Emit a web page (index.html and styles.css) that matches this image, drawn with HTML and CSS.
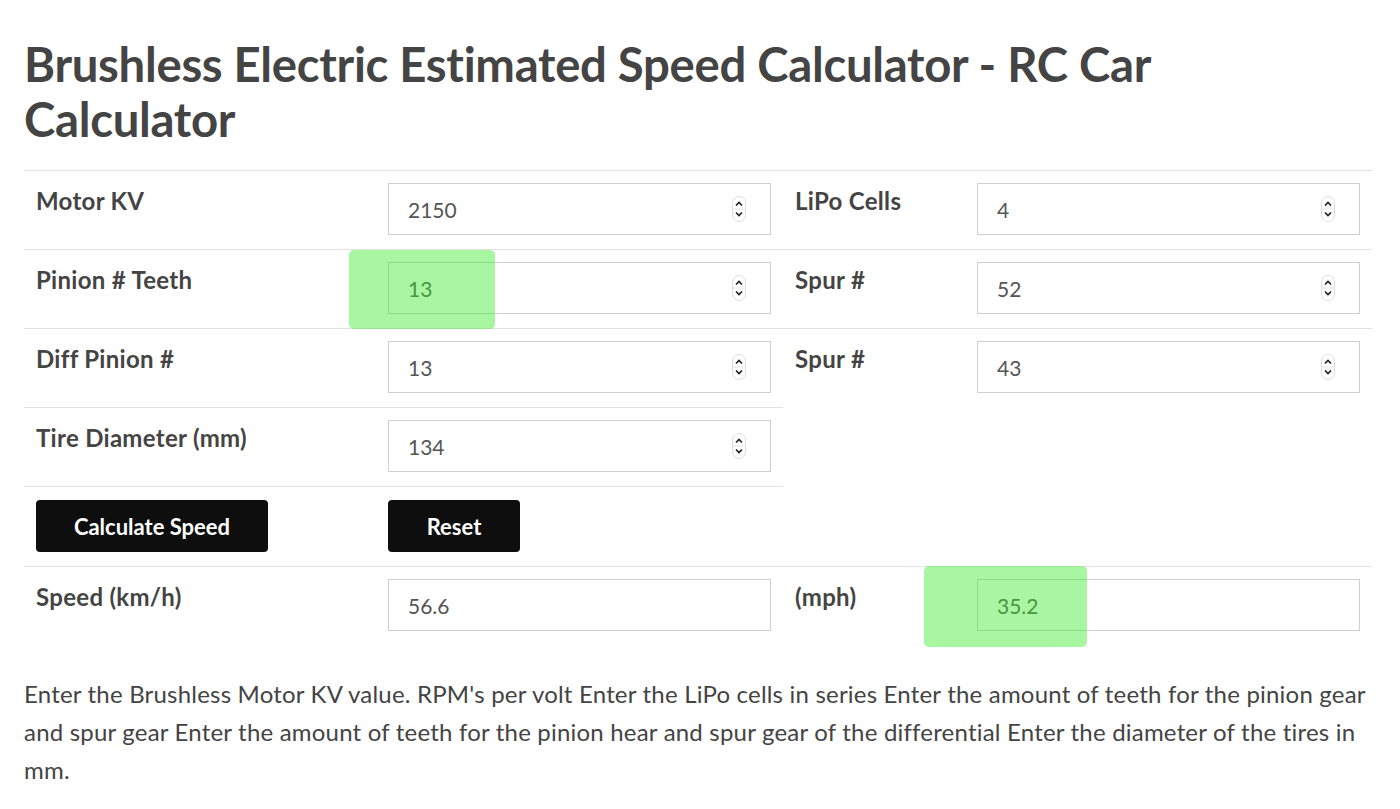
FILE: index.html
```html
<!DOCTYPE html>
<html>
<head>
<meta charset="utf-8">
<link rel="stylesheet" href="styles.css">
</head>
<body>
<div class="page">
  <h1 class="title">Brushless Electric Estimated Speed Calculator - RC Car Calculator</h1>
  <table class="calc">
    <colgroup>
      <col class="c1"><col class="c2"><col class="c3"><col class="c4">
    </colgroup>
    <tr>
      <td class="lbl">Motor KV</td>
      <td><div class="field"><span class="val">2150</span><svg class="spin" width="14" height="26" viewBox="0 0 14 26"><rect x="0.5" y="0.5" width="13" height="25" rx="6.5" fill="#fff" stroke="#ddd"/><line x1="1" y1="13" x2="13" y2="13" stroke="#e3e3e3"/><path d="M4 9.5 L7 6.5 L10 9.5" fill="none" stroke="#222" stroke-width="1.7"/><path d="M4 16.5 L7 19.5 L10 16.5" fill="none" stroke="#222" stroke-width="1.7"/></svg></div></td>
      <td class="lbl">LiPo Cells</td>
      <td><div class="field"><span class="val">4</span><svg class="spin" width="14" height="26" viewBox="0 0 14 26"><rect x="0.5" y="0.5" width="13" height="25" rx="6.5" fill="#fff" stroke="#ddd"/><line x1="1" y1="13" x2="13" y2="13" stroke="#e3e3e3"/><path d="M4 9.5 L7 6.5 L10 9.5" fill="none" stroke="#222" stroke-width="1.7"/><path d="M4 16.5 L7 19.5 L10 16.5" fill="none" stroke="#222" stroke-width="1.7"/></svg></div></td>
    </tr>
    <tr>
      <td class="lbl">Pinion # Teeth</td>
      <td class="hl-cell"><div class="field"><span class="val">13</span><svg class="spin" width="14" height="26" viewBox="0 0 14 26"><rect x="0.5" y="0.5" width="13" height="25" rx="6.5" fill="#fff" stroke="#ddd"/><line x1="1" y1="13" x2="13" y2="13" stroke="#e3e3e3"/><path d="M4 9.5 L7 6.5 L10 9.5" fill="none" stroke="#222" stroke-width="1.7"/><path d="M4 16.5 L7 19.5 L10 16.5" fill="none" stroke="#222" stroke-width="1.7"/></svg></div><div class="hl hl-pinion"></div></td>
      <td class="lbl">Spur #</td>
      <td><div class="field"><span class="val">52</span><svg class="spin" width="14" height="26" viewBox="0 0 14 26"><rect x="0.5" y="0.5" width="13" height="25" rx="6.5" fill="#fff" stroke="#ddd"/><line x1="1" y1="13" x2="13" y2="13" stroke="#e3e3e3"/><path d="M4 9.5 L7 6.5 L10 9.5" fill="none" stroke="#222" stroke-width="1.7"/><path d="M4 16.5 L7 19.5 L10 16.5" fill="none" stroke="#222" stroke-width="1.7"/></svg></div></td>
    </tr>
    <tr>
      <td class="lbl">Diff Pinion #</td>
      <td><div class="field"><span class="val">13</span><svg class="spin" width="14" height="26" viewBox="0 0 14 26"><rect x="0.5" y="0.5" width="13" height="25" rx="6.5" fill="#fff" stroke="#ddd"/><line x1="1" y1="13" x2="13" y2="13" stroke="#e3e3e3"/><path d="M4 9.5 L7 6.5 L10 9.5" fill="none" stroke="#222" stroke-width="1.7"/><path d="M4 16.5 L7 19.5 L10 16.5" fill="none" stroke="#222" stroke-width="1.7"/></svg></div></td>
      <td class="lbl">Spur #</td>
      <td><div class="field"><span class="val">43</span><svg class="spin" width="14" height="26" viewBox="0 0 14 26"><rect x="0.5" y="0.5" width="13" height="25" rx="6.5" fill="#fff" stroke="#ddd"/><line x1="1" y1="13" x2="13" y2="13" stroke="#e3e3e3"/><path d="M4 9.5 L7 6.5 L10 9.5" fill="none" stroke="#222" stroke-width="1.7"/><path d="M4 16.5 L7 19.5 L10 16.5" fill="none" stroke="#222" stroke-width="1.7"/></svg></div></td>
    </tr>
    <tr>
      <td class="lbl">Tire Diameter (mm)</td>
      <td><div class="field"><span class="val">134</span><svg class="spin" width="14" height="26" viewBox="0 0 14 26"><rect x="0.5" y="0.5" width="13" height="25" rx="6.5" fill="#fff" stroke="#ddd"/><line x1="1" y1="13" x2="13" y2="13" stroke="#e3e3e3"/><path d="M4 9.5 L7 6.5 L10 9.5" fill="none" stroke="#222" stroke-width="1.7"/><path d="M4 16.5 L7 19.5 L10 16.5" fill="none" stroke="#222" stroke-width="1.7"/></svg></div></td>
      <td class="empty"></td>
      <td class="empty"></td>
    </tr>
    <tr>
      <td class="btn-cell"><button class="btn btn-calc">Calculate Speed</button></td>
      <td class="btn-cell"><button class="btn btn-reset">Reset</button></td>
      <td class="empty"></td>
      <td class="empty"></td>
    </tr>
    <tr>
      <td class="lbl">Speed (km/h)</td>
      <td><div class="field"><span class="val">56.6</span></div></td>
      <td class="lbl">(mph)</td>
      <td class="hl-cell"><div class="field"><span class="val">35.2</span></div><div class="hl hl-mph"></div></td>
    </tr>
  </table>
  <p class="desc">Enter the Brushless Motor KV value. RPM's per volt Enter the LiPo cells in series Enter the amount of teeth for the pinion gear and spur gear Enter the amount of teeth for the pinion hear and spur gear of the differential Enter the diameter of the tires in mm.</p>
</div>
</body>
</html>
```

FILE: styles.css
```css
html, body {
  margin: 0;
  padding: 0;
  background: #fff;
}
body {
  font-family: Lato, "Open Sans", Arial, sans-serif;
  color: #444;
}
.page {
  padding: 36px 28px 0 24px;
}
.title {
  margin: 0 0 24px 0;
  font-size: 47.3px;
  line-height: 55px;
  font-weight: 700;
  color: #444;
  letter-spacing: -0.3px;
}
.calc {
  width: 1348px;
  border-collapse: collapse;
  table-layout: fixed;
}
.c1 { width: 352px; }
.c2 { width: 407px; }
.c3 { width: 182px; }
.c4 { width: 407px; }
.calc td {
  border-top: 1px solid #e2e2e2;
  padding: 12px 12px 14px 12px;
  vertical-align: top;
}
.calc td.empty {
  border-top: none;
}
.lbl {
  font-size: 24px;
  font-weight: 700;
  line-height: 36px;
  color: #444;
  letter-spacing: 0.3px;
}
.hl-cell {
  position: relative;
}
.field {
  height: 52px;
  box-sizing: border-box;
  border: 1px solid #cfcfcf;
  display: flex;
  align-items: center;
  justify-content: space-between;
  padding: 0 24px 0 19px;
  background: #fff;
}
.val {
  font-size: 21px;
  color: #555;
}
.spin {
  display: block;
}
.btn-cell {
  padding-top: 13px !important;
}
.btn {
  height: 52px;
  background: #0e0e0e;
  color: #fff;
  border: none;
  border-radius: 4px;
  font-family: Lato, Arial, sans-serif;
  font-weight: 700;
  font-size: 22px;
  display: block;
}
.btn-calc {
  width: 232px;
}
.btn-reset {
  width: 132px;
}
.hl {
  position: absolute;
  background: rgba(55, 234, 41, 0.435);
  border-radius: 5px;
}
.hl-pinion {
  left: -27px;
  top: 0;
  width: 146px;
  height: 79px;
}
.hl-mph {
  left: -41px;
  top: -1px;
  width: 163px;
  height: 81px;
}
.desc {
  margin: 30px 0 0 0;
  font-size: 24px;
  line-height: 38px;
  color: #444;
  letter-spacing: 0.2px;
}
```
